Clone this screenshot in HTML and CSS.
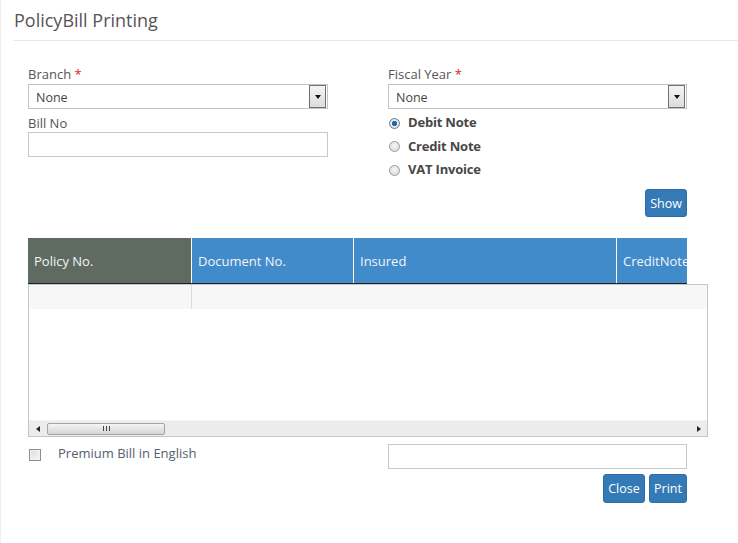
FILE: index.html
```html
<!DOCTYPE html>
<html>
<head>
<meta charset="utf-8">
<link rel="stylesheet" href="styles.css">
</head>
<body>
<div class="page">
  <div class="title">PolicyBill Printing</div>
  <div class="content">
    <div class="form-grid">
      <div class="col">
        <div class="lbl">Branch <span class="req">*</span></div>
        <div class="select"><span class="select-text">None</span><span class="arrow"><span class="tri"></span></span></div>
        <div class="lbl lbl-second">Bill No</div>
        <div class="input"></div>
      </div>
      <div class="col">
        <div class="lbl">Fiscal Year <span class="req">*</span></div>
        <div class="select"><span class="select-text">None</span><span class="arrow"><span class="tri"></span></span></div>
        <div class="radios">
          <div class="radio"><span class="dot checked"></span>Debit Note</div>
          <div class="radio"><span class="dot"></span>Credit Note</div>
          <div class="radio"><span class="dot"></span>VAT Invoice</div>
        </div>
        <div class="actions"><span class="btn btn-show">Show</span></div>
      </div>
    </div>

    <div class="grid">
      <div class="grid-head">
        <div class="th th-policy">Policy No.</div>
        <div class="th th-doc">Document No.</div>
        <div class="th th-insured">Insured</div>
        <div class="th th-credit">CreditNote</div>
      </div>
      <div class="grid-body">
        <div class="rows">
          <div class="row"><div class="cell cell-first"></div><div class="cell"></div></div>
        </div>
        <div class="hscroll">
          <div class="sb-btn"><span class="tri-left"></span></div>
          <div class="thumb"><span class="grip"></span><span class="grip"></span><span class="grip"></span></div>
          <div class="sb-space"></div>
          <div class="sb-btn"><span class="tri-right"></span></div>
        </div>
      </div>
    </div>

    <div class="bottom-grid">
      <div class="check-row"><span class="checkbox"></span><span class="check-label">Premium Bill in English</span></div>
      <div class="col">
        <div class="input"></div>
        <div class="actions actions-bottom"><span class="btn btn-close">Close</span><span class="btn btn-print">Print</span></div>
      </div>
    </div>
  </div>
</div>
</body>
</html>
```
FILE: styles.css
```css
* { box-sizing: border-box; }
html, body { margin: 0; padding: 0; background: #fff; }
body { font-family: "Open Sans", "DejaVu Sans", sans-serif; font-size: 13px; color: #555; }

.page {
  width: 738px;
  height: 543px;
  border-left: 1px solid #efefef;
  overflow: hidden;
}

.title {
  margin-left: 12px;
  padding: 8px 0 7px 1px;
  font-size: 18px;
  line-height: 25px;
  color: #555;
  border-bottom: 1px solid #e8e8e8;
}

.content { padding: 23px 0 0 27px; }

.form-grid {
  display: grid;
  grid-template-columns: 300px 299px;
  column-gap: 60px;
}

.lbl { line-height: 18px; height: 19px; padding-top: 1px; color: #555; }
.lbl-second { margin-top: 5px; height: 18px; padding-top: 0; }
.req { color: #e02020; }

.select {
  display: flex;
  height: 25px;
  margin-top: 1px;
  border: 1px solid #c3c3c3;
  background: #fff;
  padding-right: 1px;
}
.select-text { flex: 1; padding: 1px 0 0 7px; line-height: 24px; color: #444; font-size: 12.5px; }
.arrow {
  width: 17px;
  border: 1px solid #707070;
  background: linear-gradient(#f4f4f4, #dcdcdc);
  display: flex;
  align-items: center;
  justify-content: center;
}
.tri {
  width: 0; height: 0;
  border-left: 3.5px solid transparent;
  border-right: 3.5px solid transparent;
  border-top: 4px solid #111;
}

.input { height: 25px; border: 1px solid #c8c8c8; background: #fff; }

.radios { margin-top: 2.2px; }
.radio {
  height: 23.5px;
  line-height: 23px;
  display: flex;
  align-items: center;
  font-weight: bold;
  color: #474747;
  font-size: 13px;
  letter-spacing: -0.2px;
}
.dot {
  width: 11px; height: 11px;
  border-radius: 50%;
  border: 1px solid #9a9a9a;
  background: radial-gradient(circle at 50% 40%, #f8f8f8, #d4d4d4);
  margin: 1px 8px 0 1px;
  display: inline-block;
}
.dot.checked {
  border-color: #6a7a8a;
  background: radial-gradient(circle, #1f5c9a 0, #2a6db0 2.3px, #e8eef4 3px, #c8d0d8 100%);
}

.actions { display: flex; justify-content: flex-end; gap: 4px; margin-top: 7.5px; }
.btn {
  display: inline-flex;
  align-items: center;
  justify-content: center;
  height: 28px;
  background: #337ab7;
  border: 1px solid #2e6da4;
  border-radius: 3px;
  color: #fff;
  font-size: 12.5px;
}
.btn-show { width: 42px; }
.btn-close { width: 42px; height: 29px; }
.btn-print { width: 38px; height: 29px; }

.grid { margin-top: 21px; width: 680px; }
.grid-head {
  display: flex;
  width: 659px;
  height: 46px;
  border-bottom: 1px solid #222;
  overflow: hidden;
}
.th {
  flex: none;
  height: 45px;
  line-height: 47px;
  padding-left: 6px;
  color: #f2f4f8;
  background: #428bca;
  border-right: 1px solid #fff;
  white-space: nowrap;
  overflow: hidden;
}
.th-policy { width: 164px; background: #5f6b60; }
.th-doc { width: 162px; }
.th-insured { width: 263px; }
.th-credit { width: 70px; border-right: none; }

.grid-body {
  width: 680px;
  height: 153px;
  border: 1px solid #c6c6c6;
  display: flex;
  flex-direction: column;
}
.rows { flex: 1; }
.row { display: flex; height: 24px; background: #f7f7f7; }
.cell { flex: 1; }
.cell.cell-first { flex: none; width: 163px; border-right: 1px solid #dcdcdc; }

.hscroll {
  height: 16px;
  display: flex;
  align-items: center;
  background: #ececec;
  border-top: 1px solid #f4f4f4;
}
.sb-btn { width: 17px; height: 15px; display: flex; align-items: center; justify-content: center; }
.tri-left {
  width: 0; height: 0;
  border-top: 3.5px solid transparent;
  border-bottom: 3.5px solid transparent;
  border-right: 4px solid #222;
}
.tri-right {
  width: 0; height: 0;
  border-top: 3.5px solid transparent;
  border-bottom: 3.5px solid transparent;
  border-left: 4px solid #222;
}
.thumb {
  width: 118px;
  height: 12px;
  margin-left: 1px;
  border: 1px solid #a4a4a4;
  border-radius: 2px;
  background: linear-gradient(#f4f4f4, #d6d6d6);
  display: flex;
  justify-content: center;
  align-items: center;
  gap: 2px;
}
.grip { width: 1px; height: 5px; background: #444; }
.sb-space { flex: 1; }

.bottom-grid {
  display: grid;
  grid-template-columns: 300px 299px;
  column-gap: 60px;
  margin-top: 7px;
}
.check-row { display: flex; align-items: flex-start; }
.checkbox {
  width: 12px; height: 12px;
  margin: 5px 0 0 1px;
  border: 1px solid #8f8f8f;
  background: linear-gradient(135deg, #dadada, #f8f8f8);
  box-shadow: inset 0 0 0 1px #f2f2f2;
}
.check-label { margin-left: 17px; line-height: 18px; color: #536170; }
.actions-bottom { margin-top: 5px; }
```
